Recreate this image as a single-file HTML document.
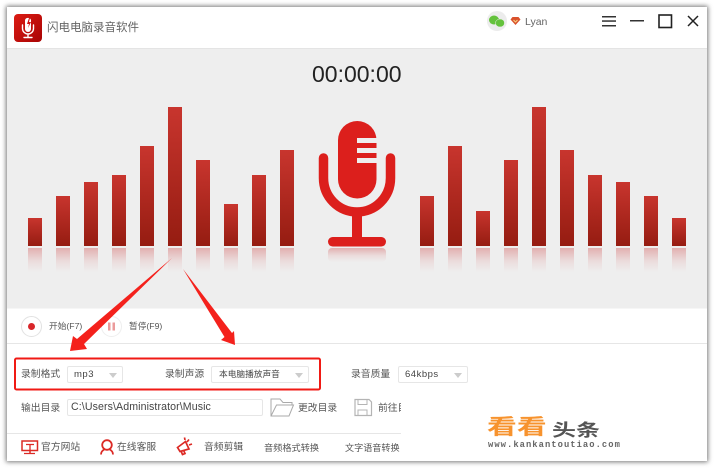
<!DOCTYPE html>
<html><head><meta charset="utf-8"><style>
html,body{margin:0;padding:0;background:#fff}
body{width:714px;height:468px;position:relative;overflow:hidden;font-family:"Liberation Sans","Noto Sans CJK SC",sans-serif;color:#444}
.a{position:absolute;white-space:nowrap}
.t{position:absolute;white-space:nowrap;font-size:9.8px;line-height:14px;color:#555}
.sel{position:absolute;box-sizing:border-box;border:1px solid #e6e6e6;border-radius:2px;background:#fff;height:17px;font-size:9.500px;line-height:15px;padding-left:6px;color:#444;letter-spacing:.5px}
.sel:after{content:"";position:absolute;right:5px;top:6px;border:4px solid transparent;border-top:5px solid #ccc;border-bottom:0}
</style></head><body>
<svg class="a" style="left:0;top:0" width="714" height="468">
<defs>
<filter id="sh" x="-5%" y="-5%" width="110%" height="110%"><feGaussianBlur stdDeviation="2.5"/></filter>
<linearGradient id="g" x1="0" y1="0" x2="0" y2="1"><stop offset="0" stop-color="#c8352e"/><stop offset="1" stop-color="#951c11"/></linearGradient>
<linearGradient id="r" x1="0" y1="0" x2="0" y2="1"><stop offset="0" stop-color="#e2b0b0"/><stop offset=".55" stop-color="#ebdcdc"/><stop offset="1" stop-color="#eee"/></linearGradient>
<linearGradient id="lg" x1="0" y1="0" x2="1" y2="1"><stop offset="0" stop-color="#dc1c14"/><stop offset="1" stop-color="#a80404"/></linearGradient>
</defs>
<rect x="6" y="6" width="702" height="456" fill="#777" filter="url(#sh)"/>
<rect x="7" y="7" width="700" height="454" fill="#fff"/>
<rect x="7" y="48" width="700" height="260.500" fill="#eee"/>
<rect x="7" y="48" width="700" height="1" fill="#e4e4e4"/>
<rect x="7" y="343" width="700" height="1" fill="#e6e6e6"/>
<rect x="7" y="433" width="394" height="1" fill="#e6e6e6"/>
<g id="bars">
<rect x="28" y="218" width="14" height="28" fill="url(#g)"/>
<rect x="56" y="196" width="14" height="50" fill="url(#g)"/>
<rect x="84" y="182" width="14" height="64" fill="url(#g)"/>
<rect x="112" y="175" width="14" height="71" fill="url(#g)"/>
<rect x="140" y="146" width="14" height="100" fill="url(#g)"/>
<rect x="168" y="107" width="14" height="139" fill="url(#g)"/>
<rect x="196" y="160" width="14" height="86" fill="url(#g)"/>
<rect x="224" y="204" width="14" height="42" fill="url(#g)"/>
<rect x="252" y="175" width="14" height="71" fill="url(#g)"/>
<rect x="280" y="150" width="14" height="96" fill="url(#g)"/>
<rect x="420" y="196" width="14" height="50" fill="url(#g)"/>
<rect x="448" y="146" width="14" height="100" fill="url(#g)"/>
<rect x="476" y="211" width="14" height="35" fill="url(#g)"/>
<rect x="504" y="160" width="14" height="86" fill="url(#g)"/>
<rect x="532" y="107" width="14" height="139" fill="url(#g)"/>
<rect x="560" y="150" width="14" height="96" fill="url(#g)"/>
<rect x="588" y="175" width="14" height="71" fill="url(#g)"/>
<rect x="616" y="182" width="14" height="64" fill="url(#g)"/>
<rect x="644" y="196" width="14" height="50" fill="url(#g)"/>
<rect x="672" y="218" width="14" height="28" fill="url(#g)"/>
</g>
<g fill="url(#r)">
<rect x="28" y="248" width="14" height="24"/><rect x="56" y="248" width="14" height="24"/><rect x="84" y="248" width="14" height="24"/><rect x="112" y="248" width="14" height="24"/><rect x="140" y="248" width="14" height="24"/><rect x="168" y="248" width="14" height="24"/><rect x="196" y="248" width="14" height="24"/><rect x="224" y="248" width="14" height="24"/><rect x="252" y="248" width="14" height="24"/><rect x="280" y="248" width="14" height="24"/>
<rect x="420" y="248" width="14" height="24"/><rect x="448" y="248" width="14" height="24"/><rect x="476" y="248" width="14" height="24"/><rect x="504" y="248" width="14" height="24"/><rect x="532" y="248" width="14" height="24"/><rect x="560" y="248" width="14" height="24"/><rect x="588" y="248" width="14" height="24"/><rect x="616" y="248" width="14" height="24"/><rect x="644" y="248" width="14" height="24"/><rect x="672" y="248" width="14" height="24"/>
</g>
<!-- big mic -->
<rect x="338" y="121" width="38.500" height="77.500" rx="19.250" fill="#dc1f1c"/>
<g fill="#eee"><rect x="357" y="138" width="20" height="5"/><rect x="357" y="148" width="20" height="5"/><rect x="357" y="158" width="20" height="5"/></g>
<path d="M323.500 158V178a33.500 34 0 0 0 67 0V158" fill="none" stroke="#dc1f1c" stroke-width="9.500" stroke-linecap="round"/>
<rect x="352" y="212" width="10" height="28" fill="#dc1f1c"/>
<rect x="328" y="237" width="58" height="9.500" rx="4.700" fill="#dc1f1c"/>
<rect x="328" y="248" width="58" height="14" rx="4" fill="url(#r)"/>
<!-- logo -->
<rect x="14" y="14" width="28" height="28" rx="4" fill="url(#lg)"/>
<path d="M25 20a3.200 3.200 0 0 1 6 0v9a3 3 0 0 1-6 0z" fill="#fff"/>
<path d="M29 18l-2 6h2l-1 4 3-6h-2l1-4z" fill="#d01010"/>
<path d="M22.500 25v3.500a5.500 5.500 0 0 0 11 0V25M28 34v3M24 37.500h8" fill="none" stroke="#fff" stroke-width="1.400" stroke-linecap="round"/>
<!-- wechat -->
<circle cx="497" cy="21" r="10" fill="#ececec"/>
<ellipse cx="494" cy="20" rx="5" ry="4.500" fill="#64c23c"/>
<ellipse cx="500" cy="23" rx="4.500" ry="4" fill="#64c23c" stroke="#ececec" stroke-width=".5"/>
<path d="M510.500 19.500l2-2.500h6l2 2.500-5 5.500z" fill="#d9512c"/><path d="M513.500 20l2 2 2-2" fill="none" stroke="#f5d080" stroke-width="1.100"/>
<!-- window controls -->
<g fill="#333"><rect x="602" y="16" width="14" height="1.500"/><rect x="602" y="20.300" width="14" height="1.500"/><rect x="602" y="25" width="14" height="1.500"/>
<rect x="630" y="20" width="14" height="1.500"/></g>
<rect x="659" y="15" width="12.500" height="12.500" fill="none" stroke="#222" stroke-width="1.600"/>
<path d="M688 16l10 10M698 16l-10 10" stroke="#222" stroke-width="1.500" fill="none"/>
<!-- start / pause -->
<circle cx="31.500" cy="326.500" r="10" fill="#fff" stroke="#e2e2e2"/><circle cx="31.500" cy="326.500" r="3.500" fill="#d8262a"/>
<circle cx="111.500" cy="326.500" r="10" fill="#fff" stroke="#eee"/><rect x="108" y="322.500" width="2.500" height="8" fill="#eb9a9a"/><rect x="112.500" y="322.500" width="2.500" height="8" fill="#eb9a9a"/>
<!-- red box -->
<rect x="15" y="358.500" width="305" height="31" rx="1.500" fill="none" stroke="#f01a14" stroke-width="2"/>
<!-- folder / save -->
<path d="M271 408v-9h9l3 3.500h9v3M271 408v8h18l4.500-11h-17l-5.500 11" fill="none" stroke="#aaa" stroke-width="1"/>
<path d="M355 399.500h14l2.500 2.500v13.500h-16.500z" fill="none" stroke="#b4b4b4" stroke-width="1.200"/><path d="M358 399.500v5h9v-5M358 415v-5h9v5" fill="none" stroke="#b4b4b4" stroke-width="1"/>
<!-- footer icons -->
<path d="M22 441h15.500v9.500H22z" fill="none" stroke="#dc2a25" stroke-width="1.500"/><path d="M26 444.500h8M30 445v5M24 453.500h11" stroke="#dc2a25" stroke-width="1.300" fill="none"/><path d="M30 450v3" stroke="#dc2a25" stroke-width="1.500"/>
<circle cx="107" cy="445" r="4.800" fill="none" stroke="#dc2a25" stroke-width="1.800"/><path d="M101 454.500c0-3 2-4.500 4-5.500M113 454.500c0-3-2-4.500-4-5.500" fill="none" stroke="#dc2a25" stroke-width="1.800"/>
<path d="M177.500 447.500l8-6 3.500 7.500-9 2.500zM181 451l1.500 3.500 2.500-1-1.500-3.500M187 442l2-2.500M189 445l3-1M185 440l-.5-2.500" fill="none" stroke="#dc2a25" stroke-width="1.700"/>
<!-- arrows -->
<path d="M172 258L84 344 87 349 70 351 73 336 77 339z" fill="#f4211c"/>
<path d="M183 269L232 333 234 331 235 345 221 340 224.500 337z" fill="#f4211c"/>
</svg>
<div class="a" style="left:47px;top:20px;font-size:11.500px;line-height:16px;color:#666">闪电电脑录音软件</div>
<div class="a" style="left:525px;top:15px;font-size:10.500px;line-height:14px;color:#666">Lyan</div>
<div class="a" style="left:312px;top:59px;font-size:23px;line-height:30px;color:#222">00:00:00</div>
<div class="t" style="left:49px;top:319px;font-size:8.700px">开始(F7)</div>
<div class="t" style="left:129px;top:319px;font-size:8.700px">暂停(F9)</div>
<div class="t" style="left:21px;top:368px">录制格式</div>
<div class="sel" style="left:67px;top:366px;width:56px">mp3</div>
<div class="t" style="left:165px;top:368px">录制声源</div>
<div class="sel" style="left:211px;top:366px;width:98px;font-size:8.700px;letter-spacing:0;padding-left:7px">本电脑播放声音</div>
<div class="t" style="left:351px;top:368px">录音质量</div>
<div class="sel" style="left:398px;top:366px;width:70px">64kbps</div>
<div class="t" style="left:21px;top:402px">输出目录</div>
<div class="sel" style="left:67px;top:399px;width:196px;padding-left:3px;font-size:10.600px;letter-spacing:.1px;height:17px" id="p">C:\Users\Administrator\Music</div>
<div class="t" style="left:298px;top:402px">更改目录</div>
<div class="t" style="left:378px;top:402px;width:23px;overflow:hidden">前往目录</div>
<div class="t" style="left:41px;top:441px">官方网站</div>
<div class="t" style="left:117px;top:441px">在线客服</div>
<div class="t" style="left:204px;top:441px">音频剪辑</div>
<div class="t" style="left:264px;top:441px;font-size:9.200px">音频格式转换</div>
<div class="t" style="left:345px;top:441px;font-size:9.100px">文字语音转换</div>
<div class="a" style="left:487px;top:415px;font-size:21px;line-height:26px;font-weight:bold;color:#f7932e;transform:scaleX(1.42);transform-origin:0 50%">看看</div>
<div class="a" style="left:552px;top:422px;font-size:17px;line-height:18px;font-weight:bold;color:#555;transform:scaleX(1.41);transform-origin:0 50%">头条</div>
<div class="a" style="left:488px;top:440px;font-family:'Liberation Mono',monospace;font-size:8.800px;line-height:10px;font-weight:bold;letter-spacing:1.05px;color:#666">www.kankantoutiao.com</div>
<style>#p:after{display:none}</style>
</body></html>
